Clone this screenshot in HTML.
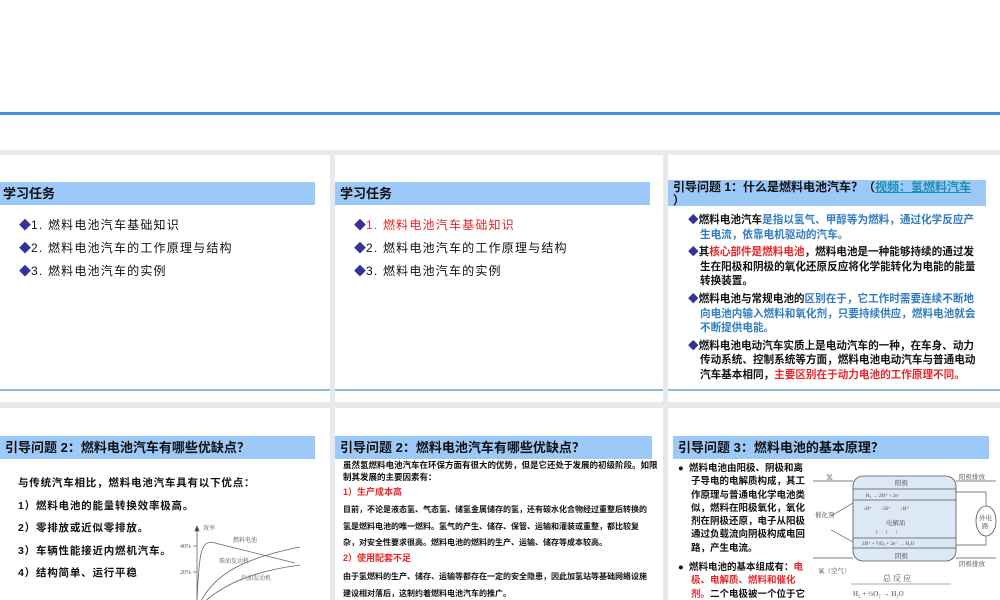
<!DOCTYPE html>
<html><head><meta charset="utf-8"><style>
*{margin:0;padding:0;box-sizing:border-box}
body{width:1000px;height:600px;overflow:hidden;background:#e9e9e9;font-family:"Liberation Sans","Noto Sans CJK SC",sans-serif;position:relative;color:#111}
.top{position:absolute;left:0;top:0;width:1000px;height:150px;background:#fff}
.bl{position:absolute;left:0;top:112px;width:1000px;height:3px;background:#4a8fd9}
.s{position:absolute;background:#fff;overflow:hidden}
.h{position:absolute;background:#9cc9f8;font-weight:bold;font-size:13px;line-height:23px;padding-left:5px;color:#111}
.ln{position:absolute;height:2px;background:#8fbcd8}
.a{position:absolute;font-size:12px;white-space:nowrap}
.t{letter-spacing:1.2px}
.d{color:#333399;letter-spacing:0}
.r{color:#e8262a}
.b{color:#2f7cc0}
</style></head><body>
<div class="top"></div><div class="bl"></div>

<div class="s" style="left:0;top:155px;width:330px;height:247px">
 <div class="h" style="left:0;top:27px;width:315px;height:23px;padding-left:3px">学习任务</div>
 <div class="a t" style="left:19px;top:61px"><span class="d">◆</span>1. 燃料电池汽车基础知识</div>
 <div class="a t" style="left:19px;top:84px"><span class="d">◆</span>2. 燃料电池汽车的工作原理与结构</div>
 <div class="a t" style="left:19px;top:107px"><span class="d">◆</span>3. 燃料电池汽车的实例</div>
 <div class="ln" style="left:0;top:234px;width:330px"></div>
</div>

<div class="s" style="left:335px;top:155px;width:328px;height:247px">
 <div class="h" style="left:0;top:27px;width:315px;height:23px">学习任务</div>
 <div class="a t r" style="left:19px;top:61px"><span class="d">◆</span>1. 燃料电池汽车基础知识</div>
 <div class="a t" style="left:19px;top:84px"><span class="d">◆</span>2. 燃料电池汽车的工作原理与结构</div>
 <div class="a t" style="left:19px;top:107px"><span class="d">◆</span>3. 燃料电池汽车的实例</div>
 <div class="ln" style="left:0;top:234px;width:328px"></div>
</div>

<div class="s" style="left:668px;top:155px;width:332px;height:247px">
 <div class="h" style="left:0;top:25px;width:318px;height:26px;font-size:12px;line-height:13px;padding-top:1px">引导问题 1：什么是燃料电池汽车？（<span style="color:#1a8fb0;text-decoration:underline">视频：氢燃料汽车</span><br>）</div>
 <div style="position:absolute;left:20px;top:58px;width:292px;font-size:10.6px;line-height:14.6px;font-weight:bold">
  <div style="padding-left:12px;text-indent:-12px;margin-bottom:3px"><span class="d">◆</span>燃料电池汽车<span class="b">是指以氢气、甲醇等为燃料，通过化学反应产生电流，依靠电机驱动的汽车。</span></div>
  <div style="padding-left:12px;text-indent:-12px;margin-bottom:3px"><span class="d">◆</span>其<span class="r">核心部件是燃料电池</span>，燃料电池是一种能够持续的通过发生在阳极和阴极的氧化还原反应将化学能转化为电能的能量转换装置。</div>
  <div style="padding-left:12px;text-indent:-12px;margin-bottom:3px"><span class="d">◆</span>燃料电池与常规电池的<span class="b">区别在于，它工作时需要连续不断地向电池内输入燃料和氧化剂，只要持续供应，燃料电池就会不断提供电能。</span></div>
  <div style="padding-left:12px;text-indent:-12px"><span class="d">◆</span>燃料电池电动汽车实质上是电动汽车的一种，在车身、动力传动系统、控制系统等方面，燃料电池电动汽车与普通电动汽车基本相同，<span class="r">主要区别在于动力电池的工作原理不同。</span></div>
 </div>
 <div class="ln" style="left:0;top:234px;width:332px"></div>
</div>

<div class="s" style="left:0;top:408px;width:330px;height:192px">
 <div class="h" style="left:0;top:28px;width:315px;height:23px;padding-left:5px">引导问题 2：燃料电池汽车有哪些优缺点？</div>
 <div style="position:absolute;left:18px;top:64px;font-size:10.5px;line-height:22.5px;font-weight:bold;letter-spacing:0.8px">
  与传统汽车相比，燃料电池汽车具有以下优点：<br>1）燃料电池的能量转换效率极高。<br>2）零排放或近似零排放。<br>3）车辆性能接近内燃机汽车。<br>4）结构简单、运行平稳
 </div>
 <svg style="position:absolute;left:175px;top:115px" width="140" height="80" viewBox="0 0 140 80">
  <g fill="none" stroke="#666" stroke-width="0.8">
   <path d="M22 80V5"/><path d="M20 8l2-5 2 5z" fill="#333"/>
   <path d="M18 23h4M18 49h4"/>
   <path d="M22 78C24 30 26 20 36 19L120 40"/>
   <path d="M25 80C40 50 70 35 125 24"/>
   <path d="M28 80C50 60 80 48 125 42"/>
  </g>
  <g font-size="6" fill="#555" font-family="Liberation Serif,'Noto Serif CJK SC',serif">
   <text x="28" y="7">效率</text><text x="5" y="25">40%</text><text x="5" y="51">20%</text>
   <text x="58" y="19">燃料电池</text><text x="44" y="40">柴油发动机</text><text x="66" y="57">汽油发动机</text>
  </g>
 </svg>
</div>

<div class="s" style="left:335px;top:408px;width:328px;height:192px">
 <div class="h" style="left:0;top:28px;width:317px;height:23px">引导问题 2：燃料电池汽车有哪些优缺点？</div>
 <div style="position:absolute;left:8px;top:52px;width:318px;font-size:8.5px;line-height:11.5px;font-weight:bold">虽然氢燃料电池汽车在环保方面有很大的优势，但是它还处于发展的初级阶段。如限制其发展的主要因素有：</div>
 <div class="a r" style="left:8px;top:77px;font-size:9px;font-weight:bold">1）生产成本高</div>
 <div style="position:absolute;left:8px;top:94px;width:310px;font-size:8px;line-height:16.5px;font-weight:bold">目前，不论是液态氢、气态氢、储氢金属储存的氢，还有碳水化合物经过重整后转换的氢是燃料电池的唯一燃料。氢气的产生、储存、保管、运输和灌装或重整，都比较复杂，对安全性要求很高。燃料电池的燃料的生产、运输、储存等成本较高。</div>
 <div class="a r" style="left:8px;top:143px;font-size:9px;font-weight:bold">2）使用配套不足</div>
 <div style="position:absolute;left:8px;top:161px;width:310px;font-size:8px;line-height:16.5px;font-weight:bold">由于氢燃料的生产、储存、运输等都存在一定的安全隐患，因此加氢站等基础网络设施建设相对落后，这制约着燃料电池汽车的推广。</div>
</div>

<div class="s" style="left:668px;top:408px;width:332px;height:192px">
 <div class="h" style="left:5px;top:28px;width:316px;height:23px">引导问题 3：燃料电池的基本原理？</div>
 <div style="position:absolute;left:10px;top:54px;width:128px;font-size:9.5px;line-height:13.3px;font-weight:bold">
  <div style="padding-left:13px;text-indent:-13px;margin-bottom:6px">●&nbsp; 燃料电池由阳极、阴极和离子导电的电解质构成，其工作原理与普通电化学电池类似，燃料在阳极氧化，氧化剂在阴极还原，电子从阳极通过负载流向阴极构成电回路，产生电流。</div>
  <div style="padding-left:13px;text-indent:-13px">●&nbsp; 燃料电池的基本组成有：<span class="r">电极、电解质、燃料和催化剂。</span>二个电极被一个位于它们之间的、携带有充电电荷的固态或液态电解质分开。在电极上，催化剂，进行反应</div>
 </div>
 <svg style="position:absolute;left:145px;top:62px" width="187" height="130" viewBox="0 0 187 130">
  <g font-family="Liberation Serif,'Noto Serif CJK SC',serif" fill="#444" font-size="6.5">
   <rect x="40" y="6" width="103" height="85" rx="10" fill="#dde8f7" stroke="#555" stroke-width="0.8"/>
   <g stroke="#555" stroke-width="0.7" fill="none">
    <path d="M40 19h103M40 30h103M40 78h103M40 68h103"/>
    <path d="M0 11h40M0 88h40M143 11h40M143 88h40"/>
    <path d="M18 46L40 33M18 60L40 72"/>
    <path d="M143 22h30v22M143 75h30V58"/>
   </g>
   <ellipse cx="173" cy="51" rx="10" ry="15" fill="#fff" stroke="#555" stroke-width="0.8"/>
   <text x="82" y="15">阳极</text><text x="82" y="88">阴极</text><text x="73" y="55">电解质</text>
   <text x="13" y="9">氢</text><text x="2" y="47">催化剂</text><text x="5" y="103">氧（空气）</text>
   <text x="146" y="9">阳极排放</text><text x="146" y="96">阴极排放</text>
   <text x="166" y="50">外电</text><text x="169" y="58">路</text>
   <text x="53" y="27" font-size="5">H₂ → 2H⁺ + 2e⁻</text>
   <text x="49" y="75" font-size="5">2H⁺ + ½O₂ + 2e⁻ → H₂O</text>
   <text x="50" y="40" font-size="5">↓H⁺　　↓H⁺　　↓H⁺</text>
   <text x="62" y="63">↓　↓　↓</text>
   <text x="70" y="111" font-size="8">总 反 应</text>
   <path d="M38 114h100" stroke="#555" stroke-width="0.6"/>
   <text x="40" y="126" font-size="7">H₂ + ½O₂ → H₂O</text>
  </g>
 </svg>
</div>
</body></html>
